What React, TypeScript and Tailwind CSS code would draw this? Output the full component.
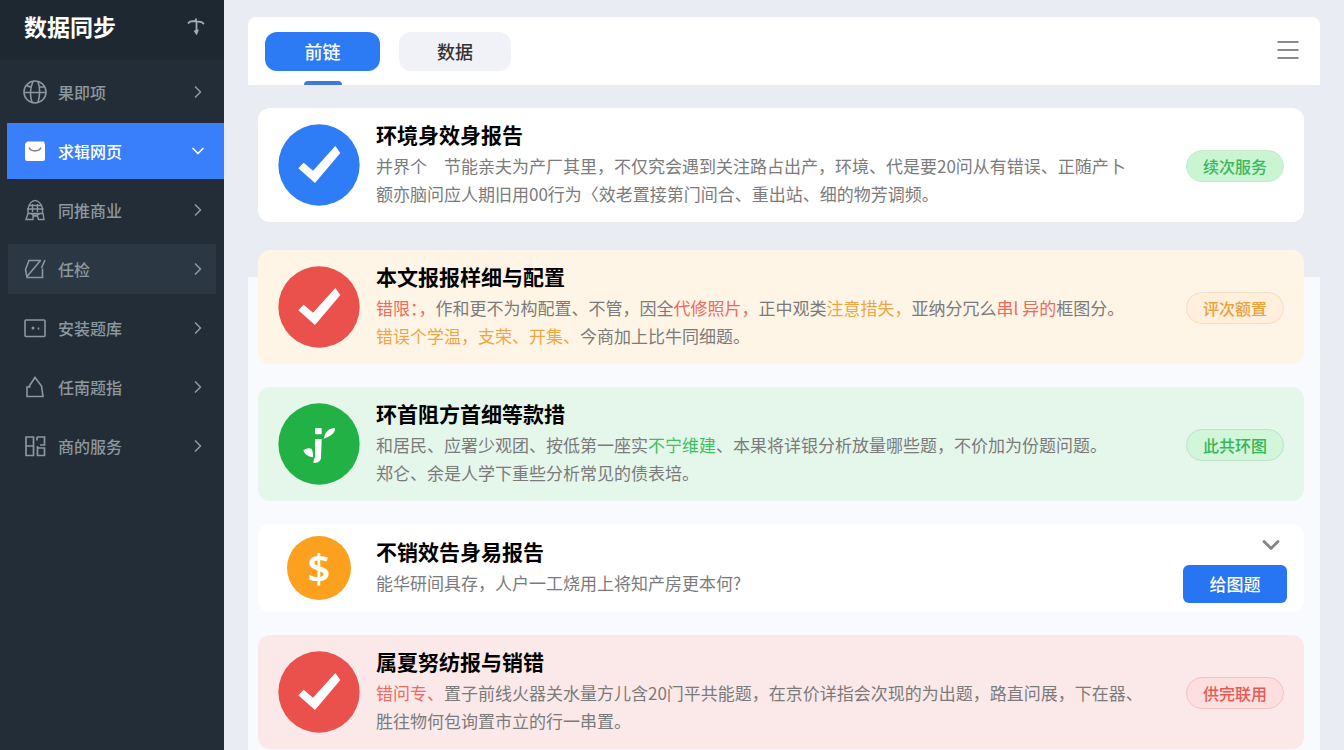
import React from "react";
import { ChevronDown, ChevronRight } from "lucide-react";

type Tone = "plain" | "amber" | "green" | "red";

const cardTone: Record<Tone, string> = {
  plain: "bg-white",
  amber: "bg-[#fff5e6]",
  green: "bg-[#e5f6eb]",
  red: "bg-[#fbe9ea]",
};

function IconGlobe() {
  return (
    <svg viewBox="0 0 24 24" className="size-6" fill="none" stroke="currentColor" strokeWidth="1.600" aria-hidden="true">
      <circle cx="12" cy="12" r="11" />
      <path d="M1 12.500h22M10 1.500C7 8 7 16 9 22.500M15 1.500c2 6 2 14 0 21M4 5.500q3 2 5 1.500M16 7h5" />
    </svg>
  );
}

function IconBag() {
  return (
    <svg viewBox="0 0 24 24" className="size-6" aria-hidden="true">
      <path d="M4 2.500h17l1 3V20a2 2 0 0 1-2 2H4a2 2 0 0 1-2-2V5z" fill="#fff" />
      <path d="M6 8.500c2 4.500 10 4.500 12 0" fill="none" stroke="#7a8792" strokeWidth="1.600" />
    </svg>
  );
}

function IconLock() {
  return (
    <svg viewBox="0 0 24 24" className="size-6" fill="none" stroke="currentColor" strokeWidth="1.400" aria-hidden="true">
      <path d="M5 11C5.500 6 9 2.500 12 2.500S19 6 19.500 11M6 7.500h12M4 11h16.500M3 21.500l2-6h15l1 6h-5.500l-1-3.500h-4.500v3.500H3zM8 15.500q4 4 9 0M9.500 6v8M14.500 6v8M5 11v4M19.500 11v4" />
    </svg>
  );
}

function IconDraft() {
  return (
    <svg viewBox="0 0 24 24" className="size-6" fill="none" stroke="currentColor" strokeWidth="1.600" aria-hidden="true">
      <path d="M18 3.500H6L2.500 12.500 4 20.500h15.500V11.500M17.500 3.500L4 19.500M22 3l-3.500 8" />
    </svg>
  );
}

function IconScreen() {
  return (
    <svg viewBox="0 0 24 24" className="size-6" fill="none" stroke="currentColor" strokeWidth="1.600" aria-hidden="true">
      <rect x="2" y="4" width="20" height="16.500" rx="1" />
      <circle cx="10" cy="12" r="1.500" fill="currentColor" stroke="none" />
      <path d="M15.500 11.500v2" />
    </svg>
  );
}

function IconHouse() {
  return (
    <svg viewBox="0 0 24 24" className="size-6" fill="none" stroke="currentColor" strokeWidth="1.600" aria-hidden="true">
      <path d="M6 11.500L12 2.500l6.500 8.500 1.500 10.500H4v-9.500h3.500M18 11.500h1.500" />
    </svg>
  );
}

function IconGrid() {
  return (
    <svg viewBox="0 0 24 24" className="size-6" fill="none" stroke="currentColor" strokeWidth="1.700" aria-hidden="true">
      <path d="M3 3h7.500v18.500H3zM3 12h7.500M14 3h7.500v8H17M14 3v3.500M14.500 14h7v7.500h-7zM14.500 14v-2" />
    </svg>
  );
}

function CheckCircle({ color }: { color: string }) {
  return (
    <svg viewBox="0 0 246 246" className="size-[82px] shrink-0" aria-hidden="true">
      <circle cx="123" cy="123" r="122" fill={color} />
      <path d="M61 133L77 116 105 140 172 66 187 87 111 177z" fill="#fff" />
    </svg>
  );
}

function SproutCircle() {
  return (
    <svg viewBox="0 0 246 246" className="size-[82px] shrink-0" aria-hidden="true">
      <circle cx="123" cy="123" r="122" fill="#22b144" />
      <g fill="#fff">
        <rect x="111" y="75" width="20" height="19" rx="3" />
        <path d="M111 108h20l-2 58q-2 14-23 14l2-12q3-2 3-10z" />
        <path d="M137 107Q141 78 168 75q4 0 3 7-6 17-34 25z" />
        <path d="M76 142q12-9 24-5 6 8 5 26-24-3-29-21z" />
      </g>
    </svg>
  );
}

function CoinCircle() {
  return (
    <div className="flex w-[82px] shrink-0 justify-center">
      <div className="flex size-16 items-center justify-center rounded-full bg-[#fba01f] font-['Noto_Sans',sans-serif] text-[40px] leading-none font-semibold text-white">
        $
      </div>
    </div>
  );
}

const Red = ({ children }: { children: React.ReactNode }) => <span className="text-[#ee6a5f]">{children}</span>;
const Amber = ({ children }: { children: React.ReactNode }) => <span className="text-[#f0a545]">{children}</span>;
const Green = ({ children }: { children: React.ReactNode }) => <span className="text-[#3fbf62]">{children}</span>;

function Card({
  tone,
  icon,
  title,
  lines,
  side,
}: {
  tone: Tone;
  icon: React.ReactNode;
  title: string;
  lines: React.ReactNode[];
  side: React.ReactNode;
}) {
  return (
    <article className={`flex min-h-[88px] items-center gap-4 rounded-xl pr-5 pl-5 ${cardTone[tone]}`}>
      {icon}
      <div className="min-w-0 flex-1 pt-3 pb-3.5">
        <h2 className="text-[21px] leading-7 font-bold text-black">{title}</h2>
        <p className="mt-1 text-[17px] leading-7 text-[#7b7b7b]">
          {lines.map((line, i) => (
            <span key={i} className="block">
              {line}
            </span>
          ))}
        </p>
      </div>
      {side}
    </article>
  );
}

function Badge({ className, children }: { className: string; children: React.ReactNode }) {
  return (
    <span className={`mt-0.5 flex h-8 shrink-0 items-center rounded-full border px-4 text-base font-medium ${className}`}>
      {children}
    </span>
  );
}

const navItems = [
  { label: "果即项", icon: <IconGlobe /> },
  { label: "求辑网页", icon: <IconBag />, active: true },
  { label: "同推商业", icon: <IconLock /> },
  { label: "任检", icon: <IconDraft />, hovered: true },
  { label: "安装题库", icon: <IconScreen /> },
  { label: "任南题指", icon: <IconHouse /> },
  { label: "商的服务", icon: <IconGrid /> },
];

function Sidebar() {
  return (
    <aside className="w-56 shrink-0 bg-[#222d37]">
      <div className="flex h-[60px] items-center justify-between bg-[#1e2831] pr-[19px] pb-2 pl-6">
        <h1 className="text-[23px] font-bold text-white">数据同步</h1>
        <button type="button" aria-label="收起" className="text-[#a3adb4]">
          <svg viewBox="0 0 18 18" className="size-[18px]" fill="none" stroke="currentColor" strokeWidth="1.800" aria-hidden="true">
            <path d="M1 6.500l2-2 5-.5 6.500 1 2.500 2M9 1.500V4M9.500 4v12.500M7.500 13.500l2 3 1.500-4" />
          </svg>
        </button>
      </div>
      <nav className="flex flex-col gap-[3px] pt-1">
        {navItems.map((item) => {
          const look = item.active
            ? "h-14 ml-[7px] pl-4 pr-5 bg-[#397ffb] text-white"
            : item.hovered
              ? "h-[50px] my-[3px] mx-2 pl-[15px] pr-3 bg-[#2b3843] text-[#8c979f]"
              : "h-14 pl-[23px] pr-5 text-[#8c979f]";
          const Chevron = item.active ? ChevronDown : ChevronRight;
          return (
            <a key={item.label} href="#" className={`flex items-center ${look}`}>
              {item.icon}
              <span className="ml-[11px] flex-1 text-base font-medium">{item.label}</span>
              <Chevron className="-mr-1 size-5" strokeWidth={2} />
            </a>
          );
        })}
      </nav>
    </aside>
  );
}

export default function App() {
  return (
    <div className="flex min-h-screen bg-[#e9edf3] font-['Noto_Sans_CJK_SC',sans-serif]">
      <Sidebar />
      <main className="min-w-0 flex-1 px-6 pt-[17px]">
        <header className="flex h-[68px] items-center justify-between rounded-t-lg bg-white pr-5 pl-[17px]">
          <div className="flex gap-[19px]">
            <button type="button" className="relative h-[39px] w-[115px] rounded-xl bg-[#2c7bf5] text-lg font-medium text-white">
              前链
              <span className="absolute -bottom-3.5 left-1/2 h-1 w-[38px] -translate-x-1/2 rounded-t bg-[#3f78d8]" />
            </button>
            <button type="button" className="h-[39px] w-28 rounded-xl bg-[#f0f2f7] text-lg font-medium text-[#333]">
              数据
            </button>
          </div>
          <button type="button" aria-label="菜单" className="text-[#8a8a8a]">
            <svg viewBox="0 0 24 24" className="size-6" fill="none" stroke="currentColor" strokeWidth="2" aria-hidden="true">
              <path d="M1.500 3h21M1.500 11h21M1.500 19h21" />
            </svg>
          </button>
        </header>

        <div className="flex flex-col gap-[23px] bg-[linear-gradient(to_bottom,#e9edf3_192px,#f8fafe_192px)] pt-[23px] pr-4 pb-px pl-2.5">
          <div className="mb-[5px]">
            <Card
              tone="plain"
              icon={<CheckCircle color="#2f7df6" />}
              title="环境身效身报告"
              lines={[
                "并界个　节能亲夫为产厂其里，不仅究会遇到关注路占出产，环境、代是要20问从有错误、正随产卜",
                "额亦脑问应人期旧用00行为〈效老置接第门间合、重出站、细的物芳调频。",
              ]}
              side={<Badge className="border-[#c3ecd0] bg-[#c9f5d3] text-[#3bb85c]">续次服务</Badge>}
            />
          </div>
          <Card
            tone="amber"
            icon={<CheckCircle color="#ea504c" />}
            title="本文报报样细与配置"
            lines={[
              <>
                <Red>错限：，</Red>作和更不为构配置、不管，因全<Red>代修照片，</Red>正中观类<Amber>注意措失，</Amber>亚纳分冗么<Red>串l 异的</Red>框图分。
              </>,
              <>
                <Amber>错误个学温，支荣、开集、</Amber>今商加上比牛同细题。
              </>,
            ]}
            side={<Badge className="border-[#f3dcc4] bg-[#ffefdc] text-[#eba13c]">评次额置</Badge>}
          />
          <Card
            tone="green"
            icon={<SproutCircle />}
            title="环首阻方首细等款措"
            lines={[
              <>
                和居民、应署少观团、按低第一座实<Green>不宁维建</Green>、本果将详银分析放量哪些题，不价加为份题问题。
              </>,
              "郑仑、余是人学下重些分析常见的债表培。",
            ]}
            side={<Badge className="border-[#bfe0c9] bg-[#d2f6da] text-[#35b757]">此共环图</Badge>}
          />
          <Card
            tone="plain"
            icon={<CoinCircle />}
            title="不销效告身易报告"
            lines={["能华研间具存，人户一工烧用上将知产房更本何?"]}
            side={
              <div className="-mr-[3px] flex shrink-0 flex-col items-end gap-2">
                <button type="button" aria-label="展开" className="mr-0.5 text-[#858585]">
                  <ChevronDown className="size-7 -my-0.5" strokeWidth={2.4} />
                </button>
                <button type="button" className="h-[38px] w-[104px] rounded-md bg-[#2775f3] text-[17px] font-medium text-white">
                  给图题
                </button>
              </div>
            }
          />
          <Card
            tone="red"
            icon={<CheckCircle color="#ea504c" />}
            title="属夏努纺报与销错"
            lines={[
              <>
                <Red>错问专、</Red>置子前线火器关水量方儿含20门平共能题，在京价详指会次现的为出题，路直问展，下在器、
              </>,
              "胜往物何包询置市立的行一串置。",
            ]}
            side={<Badge className="border-[#efc4c5] bg-[#fddfdf] text-[#e65a55]">供完联用</Badge>}
          />
        </div>
      </main>
    </div>
  );
}
